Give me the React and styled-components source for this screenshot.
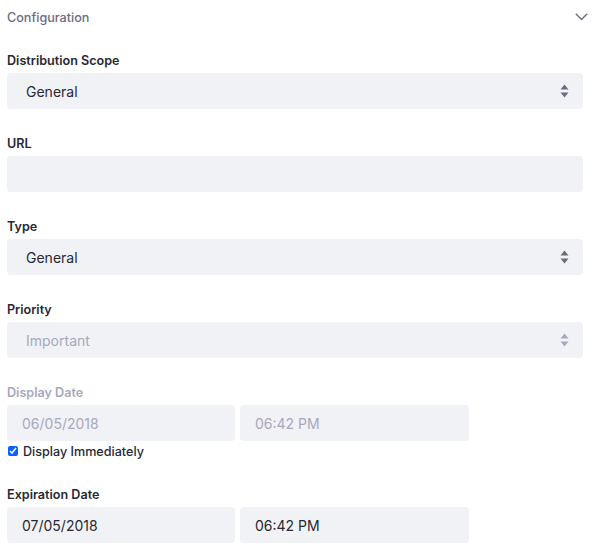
import React, { useState } from 'react';
import styled, { createGlobalStyle } from 'styled-components';

const GlobalStyle = createGlobalStyle`
    body {
        margin : 0;
        background-color : #fff;
        font-family : Inter, "Noto Sans", "Liberation Sans", sans-serif;
    }
`;

const Panel = styled.div`
    width : 576px;
    padding : 0 10px 0 7px;
`;

const PanelHeader = styled.div`
    display : flex;
    align-items : center;
    justify-content : space-between;
    width : 581px;
    height : 34px;
    margin-bottom : 18px;
`;

const PanelTitle = styled.span`
    font-size : 12.6px;
    font-weight : 500;
    color : #6b6c7e;
`;

const FormGroup = styled.div`
    margin-bottom : ${(props)=>(props.tight ? "0" : "26px")};
`;

const Label = styled.label`
    display : block;
    height : 18px;
    line-height : 18px;
    margin-bottom : 3px;
    font-size : 12.6px;
    font-weight : 600;
    color : ${(props)=>(props.disabled ? "#a7a9bc" : "#272833")};
`;

const Field = styled.div`
    position : relative;
    display : flex;
    align-items : center;
    box-sizing : border-box;
    width : ${(props)=>(props.w ? props.w : "100%")};
    height : 36px;
    padding-left : ${(props)=>(props.pad ? props.pad : "19px")};
    background-color : #f1f2f5;
    border-radius : 4px;
    font-size : 14px;
    color : ${(props)=>(props.disabled ? "#a7a9bc" : "#272833")};
`;

const Arrows = styled.svg`
    position : absolute;
    right : 14px;
    top : 11px;
`;

const Row = styled.div`
    display : flex;
    gap : 5px;
`;

const CheckRow = styled.div`
    display : flex;
    align-items : center;
    gap : 5px;
    height : 20px;
    margin : 0 0 25px 1px;
    font-size : 12.6px;
    font-weight : 500;
    color : #272833;
`;

const Check = styled.input`
    width : 10px;
    height : 10px;
    margin : 0;
    accent-color : #0b5fff;
`;

const SelectArrows = ({ disabled })=>(
    <Arrows width="9" height="14" viewBox="0 0 9 14">
        <path d="M4.5 0.5 L8.5 5.5 H0.5 Z M4.5 13.5 L8.5 8.5 H0.5 Z" fill={disabled ? "#a7a9bc" : "#6b6c7e"} />
    </Arrows>
);

const SelectField = ({ value, disabled })=>(
    <Field disabled={disabled}>
        {value}
        <SelectArrows disabled={disabled} />
    </Field>
);

const App = ()=>{
    const [immediate, setImmediate] = useState(true);

    return(
        <Panel>
            <GlobalStyle />
            <PanelHeader>
                <PanelTitle>Configuration</PanelTitle>
                <svg width="13" height="8" viewBox="0 0 13 8">
                    <path d="M0.8 0.8 L6.5 6.6 L12.2 0.8" fill="none" stroke="#6b6c7e" strokeWidth="1.4" />
                </svg>
            </PanelHeader>
            <FormGroup>
                <Label>Distribution Scope</Label>
                <SelectField value="General" />
            </FormGroup>
            <FormGroup>
                <Label>URL</Label>
                <Field />
            </FormGroup>
            <FormGroup>
                <Label>Type</Label>
                <SelectField value="General" />
            </FormGroup>
            <FormGroup>
                <Label>Priority</Label>
                <SelectField value="Important" disabled />
            </FormGroup>
            <FormGroup tight>
                <Label disabled>Display Date</Label>
                <Row>
                    <Field w="228px" pad="15px" disabled>06/05/2018</Field>
                    <Field w="229px" pad="15px" disabled>06:42 PM</Field>
                </Row>
            </FormGroup>
            <CheckRow>
                <Check type="checkbox" checked={immediate} onChange={()=>setImmediate(!immediate)} />
                Display Immediately
            </CheckRow>
            <FormGroup>
                <Label>Expiration Date</Label>
                <Row>
                    <Field w="228px" pad="15px">07/05/2018</Field>
                    <Field w="229px" pad="15px">06:42 PM</Field>
                </Row>
            </FormGroup>
        </Panel>
    );
}

export default App;
